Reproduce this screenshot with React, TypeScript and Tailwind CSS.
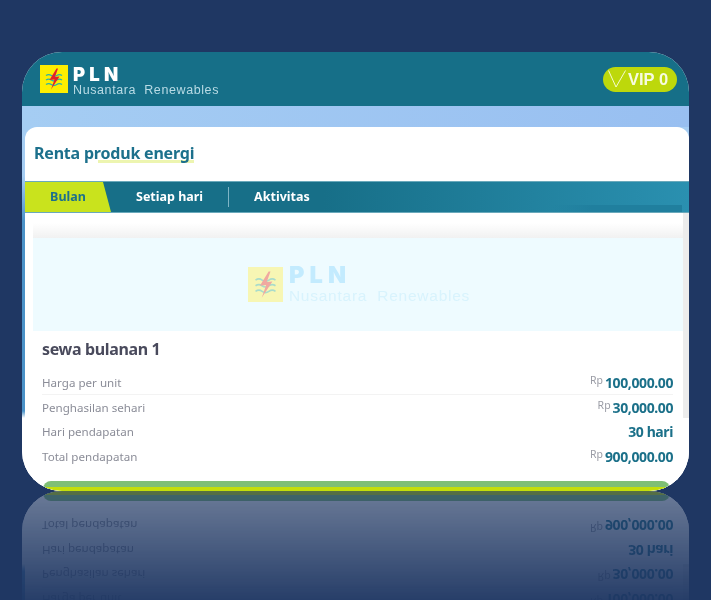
import React from "react";

function Mark({ size, pale }: { size: number; pale?: boolean }) {
  return (
    <svg width={size} height={size} viewBox="0 0 28 28" className="shrink-0">
      <rect width="28" height="28" fill={pale ? "#f7f6b4" : "#fdee00"} />
      <g fill="none" stroke={pale ? "#a9dccb" : "#2bb3a8"} strokeWidth="1.300">
        <path d="M6 10.500c2-1.400 3.400-1.400 5.300 0s3.400 1.400 5.400 0 3.400-1.400 5.300 0" />
        <path d="M6 15c2-1.400 3.400-1.400 5.300 0s3.400 1.400 5.400 0 3.400-1.400 5.300 0" />
        <path d="M6 19.500c2-1.400 3.400-1.400 5.300 0s3.400 1.400 5.400 0 3.400-1.400 5.300 0" />
      </g>
      <path d="M16.500 3.500 9.500 15l5-.6L11 24.500l8.500-13-4.500.5 3-8.500z" fill={pale ? "#f0a9a0" : "#e3202a"} />
    </svg>
  );
}

function Row({ label, value, rp, line }: { label: string; value: string; rp?: boolean; line?: boolean }) {
  return (
    <div className={`flex h-[24.4px] items-center justify-between ${line ? "border-b border-[#f3f3f3]" : ""}`}>
      <span className="text-[11.600px] text-[#8b8d98]">{label}</span>
      <span className="flex items-center gap-[2px]">
        {rp && <span className="-mt-[5px] text-[10.500px] leading-none text-[#9a9ca5]">Rp</span>}
        <span className="text-[14px] font-bold tracking-[-0.400px] text-[#1b7089]">{value}</span>
      </span>
    </div>
  );
}

export default function App() {
  return (
    <div className="h-[600px] overflow-hidden bg-[#1f3763] pl-[22px] pt-[52px] font-['Noto_Sans',sans-serif]">
      <div className="flex h-[439px] w-[667px] flex-col overflow-hidden rounded-[40px] bg-white [-webkit-box-reflect:below_0px_linear-gradient(transparent_72%,rgba(255,255,255,0.34))]">
        <header className="flex h-[54px] shrink-0 items-center justify-between bg-[#166f88] pl-[18px] pr-[12px]">
          <div className="flex items-center gap-[5px]">
            <Mark size={28} />
            <div className="pt-[6px] font-['Liberation_Sans',sans-serif]">
              <div className="font-['Inter',sans-serif] text-[18.500px] font-black leading-[17px] tracking-[4.200px] text-white">PLN</div>
              <div className="whitespace-pre text-[12.500px] leading-[15px] tracking-[0.600px] text-[#b9dbe5]">Nusantara  Renewables</div>
            </div>
          </div>
          <div className="flex h-[25px] w-[74px] items-center gap-[2px] rounded-full bg-[#bdd80b] pl-[5px] font-['Liberation_Sans',sans-serif]">
            <svg width="18" height="18" viewBox="0 0 18 18" fill="none" stroke="#f4fbd0" strokeWidth="1">
              <path d="M.5 .5 8 17 17.500 .5" />
            </svg>
            <span className="text-[16.500px] font-bold text-[#f7fbe0]">VIP 0</span>
          </div>
        </header>

        <div className="flex min-h-0 flex-1 flex-col bg-[linear-gradient(to_bottom,#a5cdf3_0px,#a5cdf3_70px,#4a92c8_115px,#4a92c8_305px,#ffffff_312px)] pl-[3px]">
          <div className="h-[21px] shrink-0 bg-[linear-gradient(to_right,#a5cdf3,#98bff1)]" />
          <div className="flex min-h-0 flex-1 flex-col overflow-hidden rounded-t-[12px] bg-white">
            <div className="flex h-[54px] shrink-0 items-center pb-[2px] pl-[9px]">
              <h1 className="bg-[linear-gradient(to_right,transparent_40%,#edf5b0_40%)] bg-[length:100%_3px] bg-[position:0_20px] bg-no-repeat text-[16px] font-bold leading-[26px] tracking-[-0.200px] text-[#1c708c]">
                Renta produk energi
              </h1>
            </div>

            <nav className="relative flex h-[32px] shrink-0 items-stretch border-y border-[#6aa9bb] bg-[linear-gradient(to_right,#176f88_45%,#2a90b0)] text-[12.500px] font-bold text-white">
              <div className="flex w-[86px] items-center justify-center bg-[#c9e31d] text-[#1c708c] [clip-path:polygon(0_0,78px_0,100%_100%,0_100%)]">
                Bulan
              </div>
              <div className="ml-[25px] flex items-center">Setiap hari</div>
              <div className="my-[5px] ml-[25px] w-px bg-[#7fb5c6]" />
              <div className="ml-[25px] flex items-center">Aktivitas</div>
              <div className="absolute bottom-0 right-[7px] h-[7px] w-[130px] bg-[linear-gradient(to_right,transparent,#207f9e_30%)]" />
            </nav>

            <main className="flex min-h-0 flex-1 flex-col bg-[linear-gradient(to_left,#ececec_6px,transparent_6px)] bg-[length:100%_205px] bg-no-repeat">
              <div className="mr-[6px] flex min-h-0 flex-1 flex-col bg-white">
                <div className="ml-[8px] h-[25px] shrink-0 bg-[linear-gradient(to_bottom,#ffffff_40%,#f1f1f1)]" />
                <div className="ml-[8px] flex h-[93px] shrink-0 items-center justify-center gap-[6px] bg-[#eefbff] font-['Liberation_Sans',sans-serif]">
                  <div className="-mt-[1px] ml-[2px]">
                    <Mark size={35} pale />
                  </div>
                  <div className="-mt-[2px]">
                    <div className="font-['Inter',sans-serif] text-[23.500px] font-black leading-[24px] tracking-[5.200px] text-[#c3ebfe]">PLN</div>
                    <div className="whitespace-pre text-[15.500px] leading-[17px] tracking-[0.750px] text-[#d8f3fd]">Nusantara  Renewables</div>
                  </div>
                </div>
                <div className="flex min-h-0 flex-1 flex-col pl-[17px] pr-[10px]">
                  <h2 className="mt-[6px] text-[16px] font-bold leading-[24px] tracking-[-0.350px] text-[#494a5c]">sewa bulanan 1</h2>
                  <div className="mt-[10px]">
                    <Row label="Harga per unit" value="100,000.00" rp line />
                    <Row label="Penghasilan sehari" value="30,000.00" rp />
                    <Row label="Hari pendapatan" value="30 hari" />
                    <Row label="Total pendapatan" value="900,000.00" rp />
                  </div>
                </div>
                <div className="ml-[18px] mr-[13px] mt-auto h-[10px] shrink-0 rounded-t-[8px] border-b-[4px] border-[#c4de0a] bg-[#7fbf75]" />
              </div>
            </main>
          </div>
        </div>
      </div>
    </div>
  );
}
